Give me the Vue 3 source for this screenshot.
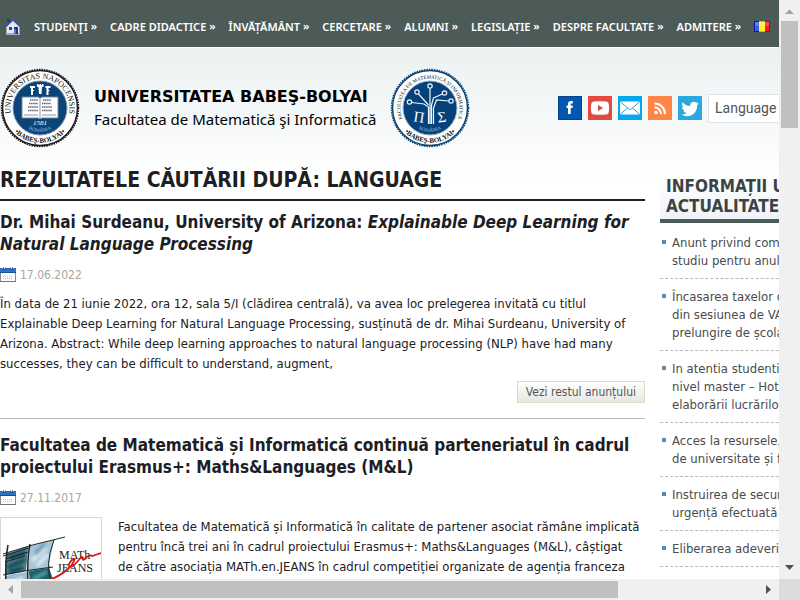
<script setup>
const menu = [
  'STUDENŢI', 'CADRE DIDACTICE', 'ÎNVĂȚĂMÂNT', 'CERCETARE',
  'ALUMNI', 'LEGISLAȚIE', 'DESPRE FACULTATE', 'ADMITERE'
]
const news = [
  ['Anunt privind completarea', 'studiu pentru anul universitar'],
  ['Încasarea taxelor de școlarizare', 'din sesiunea de VARĂ și', 'prelungire de școlaritate'],
  ['In atentia studentilor de la', 'nivel master – Hotărâre privind', 'elaborării lucrărilor'],
  ['Acces la resursele, informatice', 'de universitate și facultate'],
  ['Instruirea de securitate și', 'urgență efectuată în'],
  ['Eliberarea adeverințelor']
]
</script>

<template>
  <div class="window">
    <div class="viewport">
      <nav class="menu">
        <a href="#" class="home" aria-label="Acasă">
          <svg width="16" height="18" viewBox="0 0 16 18">
            <path d="M2 1h3v3H2z" fill="#1b2fc0" />
            <path d="M1.500 8.500 8 3l6.500 5.500V16.500h-13z" fill="#e6e8f0" />
            <path d="M1 15h14v2H1z" fill="#a4a9b4" />
            <path d="M.5 9 8 2l7.500 7" fill="none" stroke="#3a4cc0" stroke-width="1.200" />
            <path d="M1.500 9.500 8 3.500l6.500 6" fill="none" stroke="#d0d3e2" />
            <path d="M4.500 9.500h2v2h-2z" fill="#7885a0" stroke="#2b2f3c" />
            <path d="M9 9h4v7H9z" fill="#0b3d91" />
            <path d="M9 11h2v5H9z" fill="#3d7bd0" />
          </svg>
        </a>
        <a v-for="m in menu" :key="m" href="#" class="entry"><span>{{ m }}</span><span class="more">»</span></a>
        <a href="#" class="flag" aria-label="Română">
          <svg width="16" height="11" viewBox="0 0 16 11">
            <path d="M0 0h6v11H0z" fill="#3b63e0" />
            <path d="M5 0h6v11H5z" fill="#ffee2a" />
            <path d="M11 0h5v11h-5z" fill="#fb1b25" />
            <path d="M5 .5H.5v10H5" fill="none" stroke="#0618a0" />
            <path d="M5 .5h6M5 10.500h6" stroke="#e0b800" />
            <path d="M11 .5h4.500v10H11" fill="none" stroke="#c80000" />
            <path d="M1 1h14v4H1z" fill="#fff" opacity=".18" />
          </svg>
        </a>
      </nav>

      <header class="banner">
        <svg class="seal" viewBox="0 0 80 80" role="img" aria-label="Universitatea Babeş-Bolyai">
          <defs>
            <path id="outer-top" d="M13 52A29.500 29.500 0 1 1 67 52" />
            <path id="outer-low" d="M11 59.500A35 35 0 0 0 69 59.500" />
            <path id="inner-low" d="M18 49.500A24 24 0 0 0 62 49.500" />
          </defs>
          <circle cx="40" cy="40" r="38.500" fill="#fff" stroke="#1c1718" stroke-width="1.500" stroke-dasharray="1.500 1" />
          <circle cx="40" cy="40" r="37.500" fill="#fff" stroke="#1c1718" stroke-width="1.500" />
          <circle cx="40" cy="40" r="27" fill="#0b4478" stroke="#8296ad" />
          <text class="ring wide"><textPath href="#outer-top" startOffset="50%">UNIVERSITAS NAPOCENSIS</textPath></text>
          <text class="ring low"><textPath href="#outer-low" startOffset="50%">•BABEŞ-BOLYAI•</textPath></text>
          <text class="ring pale"><textPath href="#inner-low" startOffset="50%">ROMÂNIA</textPath></text>
          <path d="M30 18h5v2h-2v2h1v1h-1v4h-2v-7h-1zM37 16h1.500v1h1v-1h1.500v1h1v-1h1.500v3H42l-.5 7h-2.500l-.5-7H37zM45.500 18h5v2h-2v2h1v1h-1v4h-2v-7h-1z" fill="#fff" />
          <path d="M22 29h16l2 1 2-1h16v21H42l-2 1-2-1H22z" fill="#fff" stroke="#72869c" />
          <path d="M40 30v20" stroke="#8496a6" />
          <path d="M30 32h8M43 32h8M29 35.500h9M42 35.500h9M28 39h10M42 39h10M28 42.500h10M42 42.500h10" stroke="#59626b" stroke-width="1.500" stroke-dasharray="1.500 .6" />
          <path d="M24 47h14M42 47h14" stroke="#8494a4" />
          <text class="year" x="40" y="57">1581</text>
        </svg>
        <div class="names">
          <strong>UNIVERSITATEA BABEŞ-BOLYAI</strong>
          <span>Facultatea de Matematică şi Informatică</span>
        </div>
        <svg class="seal" viewBox="0 0 80 80" role="img" aria-label="Facultatea de Matematică şi Informatică">
          <circle cx="40" cy="40" r="38.500" fill="#fff" stroke="#0a4477" stroke-width="1.500" stroke-dasharray="1.500 1" />
          <circle cx="40" cy="40" r="37.500" fill="#fff" stroke="#0a4477" stroke-width="1.500" />
          <circle cx="40" cy="40" r="27" fill="#05417a" stroke="#9fb4c8" />
          <text class="ring fine"><textPath href="#outer-top" startOffset="50%">FACULTATEA DE MATEMATICĂ ŞI INFORMATICĂ</textPath></text>
          <text class="ring low"><textPath href="#outer-low" startOffset="50%">•BABEŞ-BOLYAI•</textPath></text>
          <text class="ring pale"><textPath href="#inner-low" startOffset="50%">ROMÂNIA</textPath></text>
          <g fill="none" stroke="#f0f5fa" stroke-width="1.200">
            <path d="M38.500 56V39L34 36l-12-1.500M40 56V20.500M41.500 56V37l2-7 9-4M43.500 56V40l3-8 12 1M38.500 37 28.500 26" />
            <circle cx="40" cy="18" r="2.200" /><circle cx="27" cy="24" r="2.200" />
            <circle cx="54.500" cy="25" r="2.200" /><circle cx="19.500" cy="34" r="2.200" />
            <circle cx="61" cy="33" r="2.200" />
          </g>
          <text class="greek" x="29" y="54" transform="rotate(8 29 50)">Π</text>
          <text class="greek" x="52" y="54" transform="rotate(-6 52 50)">Σ</text>
        </svg>

        <div class="tools">
          <a href="#" class="social facebook" aria-label="Facebook">
            <svg viewBox="0 0 24 24"><path d="M10 18v-6H8.500V9.500H10V8c0-2.200 1.200-3 3-3h1.800v2.500h-1.200c-.7 0-.9.300-.9.900v1.100h2.100l-.3 2.500h-1.800v6z" fill="#fff" /></svg>
          </a>
          <a href="#" class="social youtube" aria-label="YouTube">
            <svg viewBox="0 0 24 24"><path d="M5.500 5.500Q12 5 18.500 5.500 20.500 6 20.800 8q.5 4 0 8-.3 2-2.300 2.500-6.500.5-13 0Q3.500 18 3.200 16q-.5-4 0-8 .3-2 2.300-2.500z" fill="#fff" /><path d="M10 9v6l5-3z" fill="#d9463b" /></svg>
          </a>
          <a href="#" class="social mail" aria-label="E-mail">
            <svg viewBox="0 0 24 24"><path d="M2 5.500h20v13H2z" fill="#fff" /><path d="m2 5.500 10 8.500 10-8.500M2 18.500l7.500-6.500M22 18.500 14.500 12" fill="none" stroke="#29a8e0" /></svg>
          </a>
          <a href="#" class="social rss" aria-label="RSS">
            <svg viewBox="0 0 24 24"><circle cx="8" cy="16.500" r="1.800" fill="#fff" /><path d="M6.500 11.200a7 7 0 0 1 6.500 7M6.500 7.500A10.500 10.500 0 0 1 17 18.200" fill="none" stroke="#fff" stroke-width="2" /></svg>
          </a>
          <a href="#" class="social twitter" aria-label="Twitter">
            <svg viewBox="0 0 24 24"><path d="M20.800 7.300q-.9.400-2 .6.900-.7 1.400-1.900-1 .6-2.100.8a3.600 3.600 0 0 0-6 3.200Q7.400 10 4.500 6.300q-1.500 3 1.200 5-.9 0-1.700-.5 0 2.800 2.800 3.600-.8.200-1.500 0 .8 2.400 3.400 2.600-2.200 1.800-5.300 1.600 6.400 3.600 12.100-.5 3.700-3 3.600-8.500 1-.8 1.700-2.300z" fill="#fff" /></svg>
          </a>
          <button type="button" class="language">Language</button>
        </div>
      </header>

      <div class="columns">
        <main>
          <h1>REZULTATELE CĂUTĂRII DUPĂ: LANGUAGE</h1>

          <article>
            <h2><a href="#">Dr. Mihai Surdeanu, University of Arizona: <em>Explainable Deep Learning for<br>Natural Language Processing</em></a></h2>
            <p class="date">
              <svg width="16" height="16" viewBox="0 0 16 16"><path d="M.5 5.500h15v9H.5z" fill="#fff" stroke="#858b93" /><path d="M0 1h16v5H0z" fill="#2d73c8" /><path d="M0 5h16v1H0z" fill="#174f99" /><path d="M0 14h16v1H0z" fill="#70767d" /><path d="M4.500 0v3M11.500 0v3" stroke="#26384f" stroke-width="2" /><path d="M4.500 0v2M11.500 0v2" stroke="#e7eef8" /><path d="M3 9.500h10M3 11.500h10" stroke="#b4bac2" stroke-dasharray="1 1" /></svg>
              <time datetime="2022-06-17">17.06.2022</time>
            </p>
            <p class="text">
              În data de 21 iunie 2022, ora 12, sala 5/I (clădirea centrală), va avea loc prelegerea invitată cu titlul<br>
              Explainable Deep Learning for Natural Language Processing, susținută de dr. Mihai Surdeanu, University of<br>
              Arizona. Abstract: While deep learning approaches to natural language processing (NLP) have had many<br>
              successes, they can be difficult to understand, augment,
            </p>
            <div class="actions"><a href="#" class="rest">Vezi restul anunțului</a></div>
          </article>

          <article>
            <h2><a href="#">Facultatea de Matematică și Informatică continuă parteneriatul în cadrul<br>proiectului Erasmus+: Maths&amp;Languages (M&amp;L)</a></h2>
            <p class="date">
              <svg width="16" height="16" viewBox="0 0 16 16"><path d="M.5 5.500h15v9H.5z" fill="#fff" stroke="#858b93" /><path d="M0 1h16v5H0z" fill="#2d73c8" /><path d="M0 5h16v1H0z" fill="#174f99" /><path d="M0 14h16v1H0z" fill="#70767d" /><path d="M4.500 0v3M11.500 0v3" stroke="#26384f" stroke-width="2" /><path d="M4.500 0v2M11.500 0v2" stroke="#e7eef8" /><path d="M3 9.500h10M3 11.500h10" stroke="#b4bac2" stroke-dasharray="1 1" /></svg>
              <time datetime="2017-11-27">27.11.2017</time>
            </p>
            <div class="media">
              <svg class="thumb" viewBox="0 0 100 100" role="img" aria-label="MATh.en.JEANS">
                <defs>
                  <filter id="wash" x="-10%" y="-10%" width="120%" height="120%"><feGaussianBlur stdDeviation="1.500" /></filter>
                </defs>
                <path d="M5 36 27 28 25 53 4 57z" fill="#507f8c" />
                <path d="M29 28 53 22 48 46 50 50 27 53z" fill="#a9c6d6" />
                <path d="M4 58 26 54 27 80H3z" fill="#9dbccd" />
                <path d="M28 53 48 50 53 64 55 80H30z" fill="#18606a" />
                <g filter="url(#wash)" fill="none" stroke-width="4">
                  <path d="M8 40 24 35M7 49 24 42M8 54 22 50" stroke="#0d4652" />
                  <path d="M31 43 45 29M36 48 47 36" stroke="#dce9f0" />
                  <path d="M34 36 44 26" stroke="#6f9db8" />
                  <path d="M6 66 22 60" stroke="#dce9f0" />
                  <path d="M32 61 46 54" stroke="#5798a0" />
                </g>
                <g fill="none" stroke="#1c2429">
                  <path d="M2 36Q32 26 64 19" stroke-width="1" />
                  <path d="M7 27Q4 43 5 66M29 26Q25 45 28 80" stroke-width="1.500" />
                  <path d="M53 22Q43 48 51 66M2 57Q25 52 52 49M2 38 28 30M5 41 27 34M4 44 24 38" />
                </g>
                <text x="58" y="41" class="brand">MATh</text>
                <text x="56" y="54" class="brand">JEANS</text>
                <path d="M44 63Q58 60 70 48 76 39 72 41 67 46 68 48 70 51 77 43 81 37 82 40 81 43 84 41 88 36 91 38L100 35" fill="none" stroke="#cc1d18" stroke-width="1.800" />
              </svg>
              <p class="text">
                Facultatea de Matematică și Informatică în calitate de partener asociat rămâne implicată<br>
                pentru încă trei ani în cadrul proiectului Erasmus+: Maths&amp;Languages (M&amp;L), câștigat<br>
                de către asociația MATh.en.JEANS în cadrul competiției organizate de agenția franceza
              </p>
            </div>
          </article>
        </main>

        <aside>
          <h3>INFORMAȚII UTILE ȘI<br>ACTUALITATE</h3>
          <ul>
            <li v-for="item in news" :key="item[0]">
              <a href="#"><span v-for="line in item" :key="line">{{ line }}</span></a>
            </li>
          </ul>
        </aside>
      </div>
    </div>

    <div class="bar vertical">
      <svg width="21" height="21" viewBox="0 0 21 21"><path d="M6 14 10.500 9.500 15 14z" fill="#a3a3a3" /></svg>
      <div class="track"><div class="grip"></div></div>
      <svg width="21" height="21" viewBox="0 0 21 21"><path d="M6 7h9l-4.500 5z" fill="#505050" /></svg>
    </div>
    <div class="bar horizontal">
      <svg width="21" height="21" viewBox="0 0 21 21"><path d="M13 6v9l-5-4.500z" fill="#a3a3a3" /></svg>
      <div class="track"><div class="grip"></div></div>
      <svg width="21" height="21" viewBox="0 0 21 21"><path d="M8 6v9l5-4.500z" fill="#505050" /></svg>
    </div>
    <div class="corner"></div>
  </div>
</template>

<style>
body {
  margin: 0;
}
</style>

<style scoped>
.window {
  display: grid;
  grid-template-columns: minmax(0, 1fr) 21px;
  grid-template-rows: minmax(0, 1fr) 21px;
  height: 100vh;
  font: 13px/20px "DejaVu Sans Condensed", sans-serif;
  color: #1c2024;
}
.viewport {
  overflow: hidden;
  background: linear-gradient(#ebf1f1 48px, #fff 180px);
  white-space: nowrap;
}
a {
  color: inherit;
  text-decoration: none;
}
h1, h2, h3, p, ul {
  margin: 0;
  padding: 0;
}

.menu {
  display: flex;
  align-items: center;
  gap: 13px;
  box-sizing: border-box;
  height: 48px;
  padding: 6px 0 0 5px;
  background: #4d5b58;
  border-bottom: 1px solid #fff;
  color: #fff;
  font-family: "Noto Sans", sans-serif;
  font-size: 11px;
  font-weight: 600;
}
.menu svg {
  display: block;
}
.entry {
  display: flex;
  gap: 3px;
}
.more {
  line-height: 17px;
}

.banner {
  display: flex;
  align-items: center;
  height: 120px;
}
.seal {
  flex: none;
  width: 80px;
  height: 80px;
}
.names {
  display: flex;
  flex-direction: column;
  width: 282px;
  padding: 0 14px;
  color: #000;
  font: 15px/22px "Noto Sans", sans-serif;
}
.names strong {
  font: bold 16px/22px "DejaVu Sans", sans-serif;
}
.ring {
  font: 7px "Liberation Serif", serif;
  text-anchor: middle;
  fill: #101418;
}
.wide {
  font-size: 8px;
}
.low {
  font-weight: bold;
}
.pale {
  font-size: 5px;
  fill: #a9bfd4;
}
.fine {
  font-size: 5px;
}
.year {
  font: italic 7px "Liberation Serif", serif;
  text-anchor: middle;
  fill: #fff;
}
.greek {
  font: 15px "Liberation Serif", serif;
  text-anchor: middle;
  fill: #fff;
}
.tools {
  display: flex;
  align-items: center;
  gap: 6px;
  padding-left: 88px;
}
.social {
  width: 24px;
  height: 24px;
}
.social svg {
  display: block;
}
.facebook {
  background: #0457b0;
  box-shadow: inset 0 0 0 1px #064489;
}
.youtube {
  background: #e14b42;
}
.mail {
  background: #05a8ef;
}
.rss {
  background: #ff8547;
}
.twitter {
  background: #2aa8df;
}
.language {
  height: 29px;
  padding: 0 20px 0 6px;
  border: 1px solid #dfe3e6;
  background: #fff;
  color: #50565a;
  font: 14px Roboto, sans-serif;
}

.columns {
  display: grid;
  grid-template-columns: 645px 300px;
  gap: 15px;
}
h1 {
  padding-bottom: 7px;
  border-bottom: 2px solid #1c2024;
  font: bold 21px/24px "DejaVu Sans Condensed", sans-serif;
}
article {
  padding: 10px 0 15px;
  border-bottom: 1px solid #b9b9b9;
}
article + article {
  padding-top: 15px;
}
h2 {
  font: bold 17px/22px "DejaVu Sans Condensed", sans-serif;
}
.date {
  display: flex;
  align-items: center;
  gap: 4px;
  margin: 10px 0 9px;
  color: #aaa6a0;
  font-size: 12px;
}
.actions {
  display: flex;
  justify-content: flex-end;
  padding-top: 7px;
}
.rest {
  padding: 0 8px;
  border: 1px solid #d9e0c0;
  background: linear-gradient(#fff, #e6e7e2);
  color: #555;
  font-size: 12px;
}
.media {
  display: flex;
  align-items: flex-start;
  gap: 16px;
}
.thumb {
  flex: none;
  width: 100px;
  height: 100px;
  border: 1px solid #d8d8d8;
  background: #fff;
}
.brand {
  font: 12px "Liberation Serif", serif;
  fill: #17191c;
}

aside {
  padding-top: 8px;
}
h3 {
  padding: 0 6px 3px;
  background: linear-gradient(#fff, #eff3f9);
  border-bottom: 4px solid #4d5b58;
  color: #3c4343;
  font: bold 17px/20px "DejaVu Sans Condensed", sans-serif;
}
ul {
  padding-top: 3px;
  list-style: none;
}
li {
  display: flex;
  gap: 6px;
  padding: 8px 2px;
  border-bottom: 1px dashed #b9b9b9;
  color: #484c4e;
  line-height: 18px;
}
li + li {
  padding-top: 9px;
}
li::before {
  content: "";
  flex: none;
  width: 4px;
  height: 4px;
  margin-top: 6px;
  background: #5e8ca8;
}
li span {
  display: block;
}

.bar {
  display: flex;
  background: #f0f0f0;
}
.vertical {
  flex-direction: column;
}
.bar svg {
  flex: none;
}
.track {
  display: flex;
  flex: 1;
  flex-direction: inherit;
}
.grip {
  background: #c0c0c0;
}
.vertical .grip {
  height: 20%;
  margin: 0 2px;
}
.horizontal .grip {
  width: 81%;
  margin: 2px 0;
}
.corner {
  background: #dcdcdc;
}
</style>
